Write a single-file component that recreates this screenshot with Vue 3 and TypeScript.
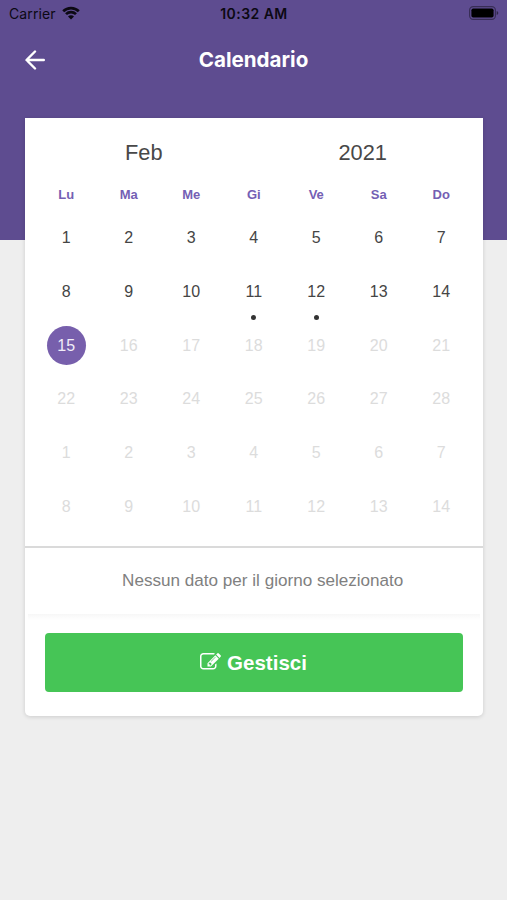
<script setup lang="ts">
interface Day {
  label: number
  muted: boolean
  selected: boolean
  marked: boolean
}

const weekdays: string[] = ['Lu', 'Ma', 'Me', 'Gi', 'Ve', 'Sa', 'Do']
const today = 15
const daysInMonth = 28
const markedDays: number[] = [11, 12]

const days: Day[] = Array.from({ length: 42 }, (_, i) => {
  const n = i + 1
  return {
    label: n > daysInMonth ? n - daysInMonth : n,
    muted: n > today,
    selected: n === today,
    marked: markedDays.includes(n),
  }
})
</script>

<template>
  <div class="screen">
    <header class="header">
      <div class="status">
        <div class="carrier">
          <span class="carrier-name">Carrier</span>
          <svg class="wifi" viewBox="0 0 18 14">
            <path d="M1.2 5.2a11.2 11.2 0 0 1 15.6 0" />
            <path d="M4 8.1a7.2 7.2 0 0 1 10 0" />
            <path class="wifi-base" d="M9 13.6L6 10.5a4.2 4.2 0 0 1 6 0z" />
          </svg>
        </div>
        <span class="time">10:32 AM</span>
        <div class="power">
          <svg class="battery" viewBox="0 0 30 14">
            <rect class="battery-case" x="0.6" y="0.6" width="25.8" height="12.8" rx="3.6" />
            <rect x="2.4" y="2.4" width="22.2" height="9.2" rx="1.8" />
            <path d="M27.7 5v4q1.6-.6 1.6-2t-1.6-2z" opacity=".5" />
          </svg>
        </div>
      </div>
      <nav class="nav">
        <svg class="back" viewBox="0 0 20 20">
          <path d="M18.8 10H1.8M10 1.5L1.5 10l8.5 8.5" />
        </svg>
        <h1 class="title">Calendario</h1>
        <span></span>
      </nav>
    </header>

    <main class="card">
      <div class="period">
        <span>Feb</span>
        <span>2021</span>
      </div>
      <div class="weekdays">
        <span v-for="name in weekdays" :key="name">{{ name }}</span>
      </div>
      <div class="days">
        <div
          v-for="(day, i) in days"
          :key="i"
          class="day"
          :class="{ muted: day.muted, selected: day.selected, marked: day.marked }"
        >
          <span class="number">{{ day.label }}</span>
        </div>
      </div>
      <p class="message">Nessun dato per il giorno selezionato</p>
      <div class="separator"></div>
      <button class="manage" type="button">
        <svg class="edit" viewBox="0 0 1792 1536">
          <path
            transform="translate(0 -128)"
            d="M888 1184l116-116-152-152-116 116v56h96v96h56zm440-720q-16-16-33 1l-350 350q-17 17-1 33t33-1l350-350q17-17 1-33zm80 594v190q0 119-84.5 203.5t-203.5 84.5h-832q-119 0-203.5-84.5t-84.5-203.5v-832q0-119 84.5-203.5t203.5-84.5h832q63 0 117 25 15 7 18 23 3 17-9 29l-49 49q-14 14-32 8-23-6-45-6h-832q-66 0-113 47t-47 113v832q0 66 47 113t113 47h832q66 0 113-47t47-113v-126q0-13 9-22l64-64q15-15 35-7t20 29zm-96-738l288 288-672 672h-288v-288zm444 132l-92 92-288-288 92-92q28-28 68-28t68 28l152 152q28 28 28 68t-28 68z"
          />
        </svg>
        <span>Gestisci</span>
      </button>
    </main>
  </div>
</template>

<style>
body {
  margin: 0;
  background: #eee;
}
</style>

<style scoped>
.screen {
  box-sizing: border-box;
  min-height: 900px;
  padding-bottom: 20px;
  background: #eee;
  font-family: 'Liberation Sans', Arial, sans-serif;
}

.header {
  height: 240px;
  background: #5e4c90;
  font-family: Inter, sans-serif;
}

.status {
  display: grid;
  grid-template-columns: 1fr auto 1fr;
  align-items: center;
  height: 27px;
  padding: 0 8px 0 9px;
  color: #0c0913;
  font-size: 14px;
}

.carrier {
  display: flex;
  align-items: center;
  gap: 6px;
}

.carrier-name {
  letter-spacing: 0.1px;
}

.wifi {
  width: 18px;
  height: 14px;
  margin-top: -2px;
  fill: none;
  stroke: currentColor;
  stroke-width: 2.7;
}

.wifi .wifi-base {
  fill: currentColor;
  stroke: none;
}

.time {
  font-weight: 600;
  letter-spacing: 0.45px;
}

.power {
  display: flex;
  justify-content: flex-end;
  margin-top: -1px;
}

.battery {
  width: 30px;
  height: 14px;
  fill: #000;
}

.battery .battery-case {
  fill: none;
  stroke: #000;
  stroke-opacity: 0.4;
  stroke-width: 1.2;
}

.nav {
  display: grid;
  grid-template-columns: 1fr auto 1fr;
  align-items: center;
  height: 65px;
  padding: 0 25px;
  color: #fff;
}

.back {
  width: 20px;
  height: 20px;
  fill: none;
  stroke: currentColor;
  stroke-width: 2.4;
  stroke-linecap: round;
  stroke-linejoin: round;
}

.title {
  margin: 0;
  font-size: 20.6px;
  font-weight: 700;
  line-height: 26px;
}

.card {
  display: flow-root;
  box-sizing: border-box;
  height: 598px;
  margin: -122px 24.5px 0 25px;
  border-radius: 0 0 5px 5px;
  background: #fff;
  box-shadow: 0 1px 4px rgba(0, 0, 0, 0.14);
}

.period {
  display: flex;
  justify-content: space-between;
  margin-top: 22px;
  padding: 0 95.5px 0 100px;
  color: #484848;
  font-size: 21.8px;
  line-height: 26px;
}

.weekdays,
.days {
  display: grid;
  grid-template-columns: repeat(7, 1fr);
  padding: 0 10px;
  text-align: center;
}

.weekdays {
  margin-top: 19px;
  color: #7460b4;
  font-size: 13px;
  font-weight: 700;
  line-height: 20px;
}

.days {
  grid-auto-rows: 53.7px;
  margin-top: 6.4px;
  padding-bottom: 12.4px;
  border-bottom: 2px solid #dadada;
}

.day {
  display: flex;
  flex-direction: column;
  align-items: center;
  padding-top: 7px;
  box-sizing: border-box;
  color: #454545;
  font-size: 16px;
}

.number {
  width: 39px;
  border-radius: 50%;
  line-height: 39px;
}

.muted {
  color: #dcdcdc;
}

.selected .number {
  background: #775fac;
  color: #f1edf8;
}

.marked::after {
  content: '';
  flex: none;
  width: 5px;
  height: 5px;
  margin-top: 4px;
  border-radius: 50%;
  background: #333;
}

.message {
  margin: 21px 0 0;
  padding-left: 18px;
  color: #808080;
  font-size: 17.1px;
  line-height: 24px;
  text-align: center;
}

.separator {
  height: 6px;
  margin: 21px 3px 0;
  background: linear-gradient(#f7f7f7, #fff);
}

.manage {
  display: flex;
  align-items: center;
  justify-content: center;
  gap: 6px;
  box-sizing: border-box;
  width: 418px;
  height: 59px;
  margin: 13px auto 0 20px;
  padding: 2px 1px 0 0;
  border: 0;
  border-radius: 4px;
  background: #46c556;
  color: #fff;
  font-family: inherit;
  font-size: 20.5px;
  font-weight: 700;
}

.edit {
  width: 21px;
  height: 18px;
  margin-top: -2px;
  fill: currentColor;
}
</style>
